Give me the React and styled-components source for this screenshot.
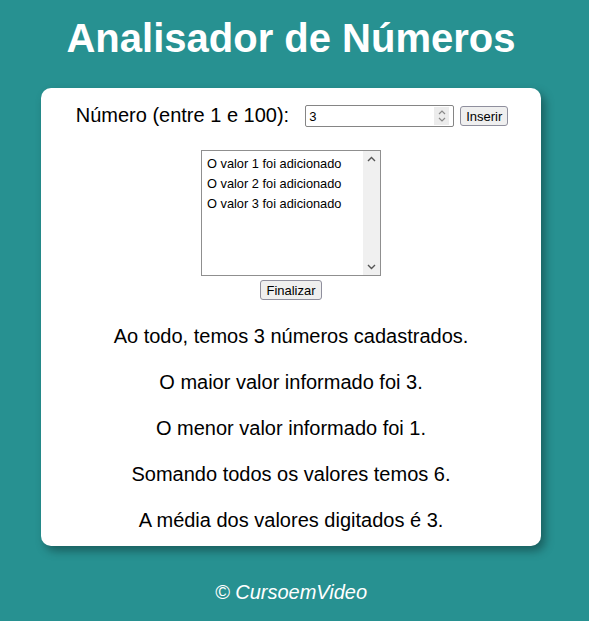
import React from 'react';
import styled, { createGlobalStyle } from 'styled-components';

const GlobalStyle = createGlobalStyle`
  html, body {
    margin: 0;
    padding: 0;
    background: #279191;
  }
  body {
    font-family: 'Liberation Sans', Arial, sans-serif;
  }
`;

const valores = [1, 2, 3];

const App = () => {
  const total = valores.length;
  const maior = Math.max(...valores);
  const menor = Math.min(...valores);
  const soma = valores.reduce((a, b) => a + b, 0);
  // o original mostra o último valor como média
  const media = valores[valores.length - 1];

  return (
    <Page>
      <GlobalStyle />
      <Title>Analisador de Números</Title>
      <Card>
        <InputRow>
          <Label htmlFor="numero">Número (entre 1 e 100):</Label>
          <Field>
            <NumberInput id="numero" type="text" defaultValue="3" />
            <Spinner>
              <svg width="10" height="16" viewBox="0 0 10 16">
                <path d="M2 6 L5 3 L8 6" fill="none" stroke="#8a8a8a" strokeWidth="1.2" />
                <path d="M2 10 L5 13 L8 10" fill="none" stroke="#8a8a8a" strokeWidth="1.2" />
              </svg>
            </Spinner>
          </Field>
          <Button>Inserir</Button>
        </InputRow>

        <ListBox>
          <ListItems>
            {valores.map((v) => (
              <ListItem key={v}>O valor {v} foi adicionado</ListItem>
            ))}
          </ListItems>
          <ScrollTrack>
            <svg width="9" height="6" viewBox="0 0 9 6">
              <path d="M1 5 L4.5 1.5 L8 5" fill="none" stroke="#555" strokeWidth="1.4" />
            </svg>
            <svg width="9" height="6" viewBox="0 0 9 6">
              <path d="M1 1 L4.5 4.5 L8 1" fill="none" stroke="#555" strokeWidth="1.4" />
            </svg>
          </ScrollTrack>
        </ListBox>
        <Button $top={4}>Finalizar</Button>

        <Results>
          <Result>Ao todo, temos {total} números cadastrados.</Result>
          <Result>O maior valor informado foi {maior}.</Result>
          <Result>O menor valor informado foi {menor}.</Result>
          <Result>Somando todos os valores temos {soma}.</Result>
          <Result>A média dos valores digitados é {media}.</Result>
        </Results>
      </Card>
      <Footer>© CursoemVideo</Footer>
    </Page>
  );
};

export default App;

const Page = styled.div`
  display: flex;
  flex-direction: column;
  align-items: center;
  min-height: 621px;
  padding-right: 7px;
`;

const Title = styled.h1`
  margin: 14px 0 0;
  height: 74px;
  font-size: 40px;
  line-height: 48px;
  font-weight: bold;
  color: #ffffff;
  text-align: center;
`;

const Card = styled.main`
  box-sizing: border-box;
  width: 500px;
  padding: 17px 0 13px;
  background: #ffffff;
  border-radius: 10px;
  box-shadow: 4px 5px 10px rgba(0, 0, 0, 0.35);
  display: flex;
  flex-direction: column;
  align-items: center;
`;

const InputRow = styled.div`
  display: flex;
  align-items: center;
  height: 22px;
  margin-left: 2px;
`;

const Label = styled.label`
  font-size: 20px;
  color: #000;
  margin-right: 16px;
  margin-top: -2px;
`;

const Field = styled.div`
  box-sizing: border-box;
  width: 149px;
  height: 22px;
  border: 1px solid #858585;
  border-radius: 2px;
  display: flex;
  align-items: center;
  padding: 0 4px 0 3px;
`;

const NumberInput = styled.input`
  flex: 1;
  min-width: 0;
  border: none;
  outline: none;
  padding: 0;
  font-family: 'Liberation Sans', Arial, sans-serif;
  font-size: 13px;
  color: #000;
  background: transparent;
`;

const Spinner = styled.span`
  display: flex;
  align-items: center;
  justify-content: center;
  width: 15px;
  height: 18px;
  background: #ececec;
`;

const Button = styled.button`
  box-sizing: border-box;
  height: 20px;
  margin-left: ${({ $top }) => ($top ? 0 : 6)}px;
  margin-top: ${({ $top }) => $top || 0}px;
  padding: 0 5px;
  font-family: 'Liberation Sans', Arial, sans-serif;
  font-size: 13px;
  color: #000;
  background: #efefef;
  border: 1px solid #8f8f9d;
  border-radius: 3px;
`;

const ListBox = styled.div`
  box-sizing: border-box;
  margin-top: 23px;
  width: 180px;
  height: 126px;
  border: 1px solid #8f8f8f;
  display: flex;
`;

const ListItems = styled.ul`
  flex: 1;
  margin: 0;
  padding: 3px 0 0 5px;
  list-style: none;
`;

const ListItem = styled.li`
  font-family: 'Liberation Sans', Arial, sans-serif;
  font-size: 12.8px;
  line-height: 20px;
  color: #000;
  white-space: nowrap;
`;

const ScrollTrack = styled.div`
  width: 17px;
  background: #f0f0f0;
  display: flex;
  flex-direction: column;
  justify-content: space-between;
  align-items: center;
  padding: 5px 0 5px;
`;

const Results = styled.section`
  margin-top: 23px;
  display: flex;
  flex-direction: column;
  gap: 20px;
`;

const Result = styled.p`
  margin: 0;
  font-size: 20px;
  line-height: 26px;
  color: #000;
  text-align: center;
`;

const Footer = styled.footer`
  margin-top: 33px;
  font-size: 20px;
  line-height: 26px;
  font-style: italic;
  color: #ffffff;
`;
